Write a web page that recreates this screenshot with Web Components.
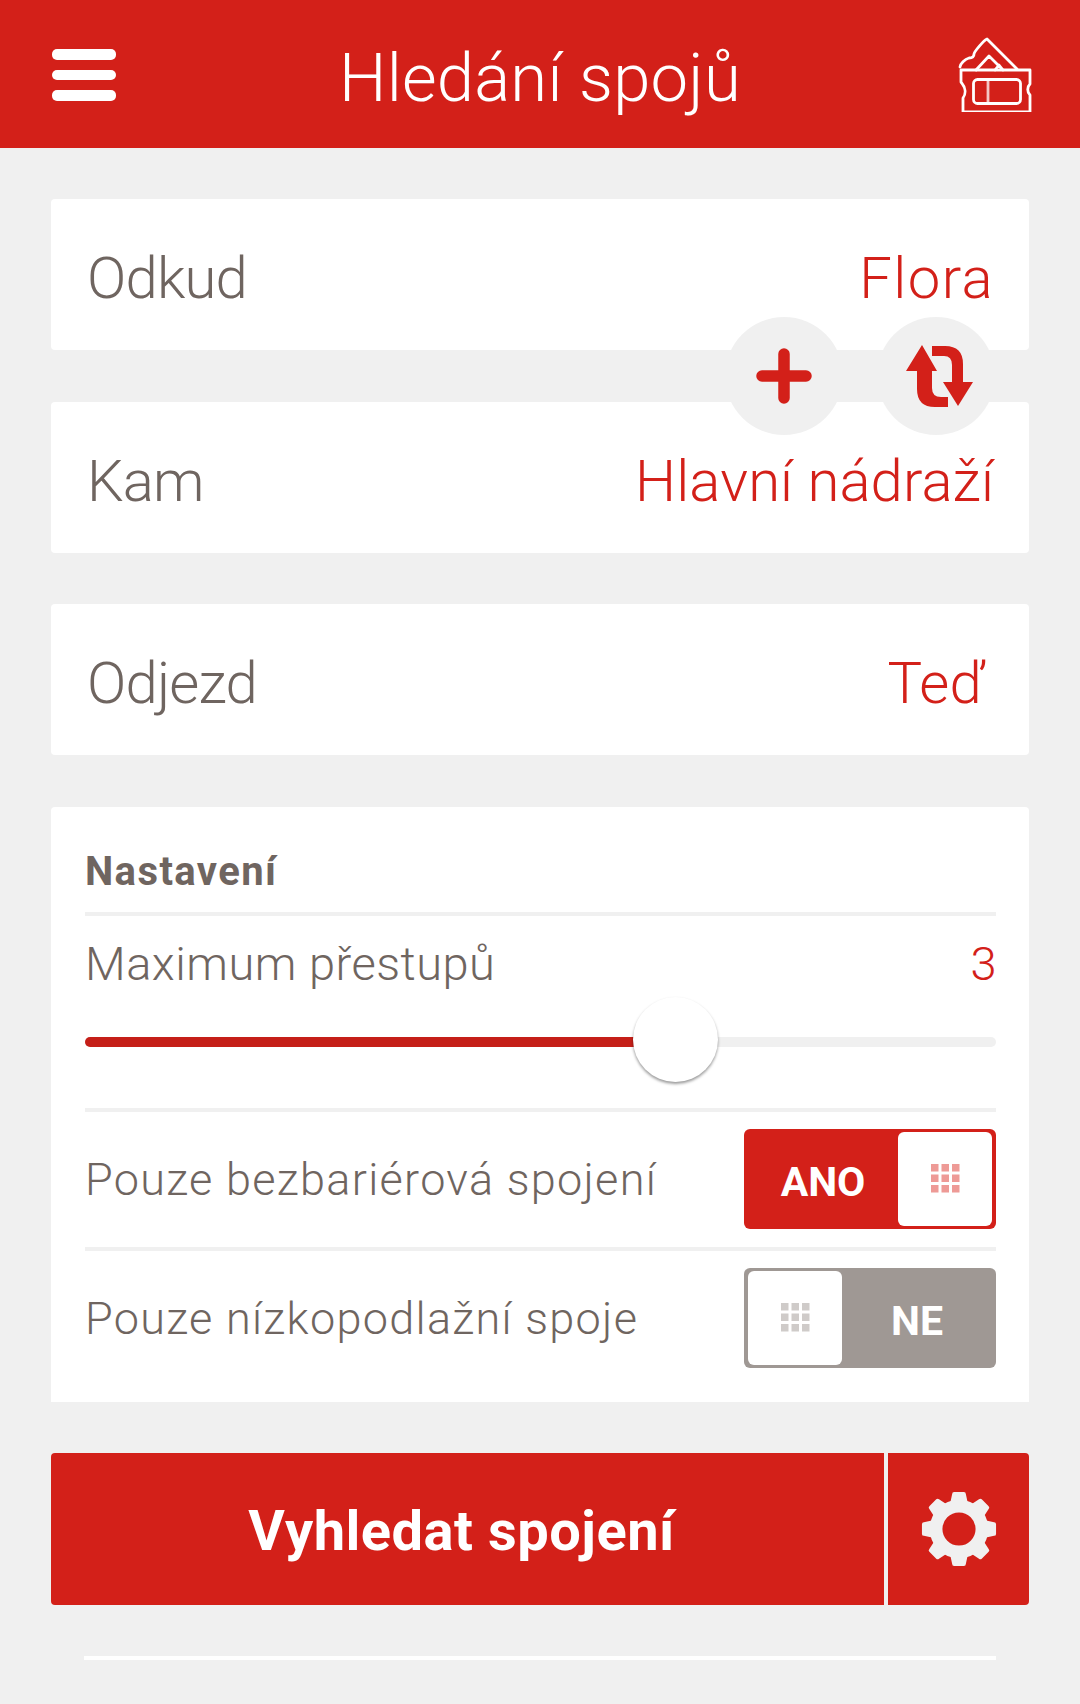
<!DOCTYPE html>
<html lang="cs"><head><meta charset="utf-8"><title>Hledání spojů</title>
<style>
html,body{margin:0;padding:0;background:#f0f0f0}
body{width:1080px;height:1704px;overflow:hidden;font-family:Roboto,"Liberation Sans",sans-serif;color:#6f6560}
</style></head><body>
<app-header title="Hledání spojů"></app-header>
<app-main>
  <route-fields>
    <field-row label="Odkud" value="Flora" style="--vs:1.4px"></field-row>
    <field-row label="Kam" value="Hlavní nádraží"></field-row>
    <round-btn slot="over" kind="plus" style="left:674px"></round-btn>
    <round-btn slot="over" kind="swap" style="left:826px"></round-btn>
  </route-fields>
  <field-row label="Odjezd" value="Teď" style="--vm:8px"></field-row>
  <settings-card title="Nastavení">
    <slider-row label="Maximum přestupů" value="3"></slider-row>
    <toggle-row label="Pouze bezbariérová spojení" on="1"></toggle-row>
    <toggle-row label="Pouze nízkopodlažní spoje"></toggle-row>
  </settings-card>
  <search-bar label="Vyhledat spojení"></search-bar>
  <end-rule></end-rule>
</app-main>
<script>
function def(name,css,html){
  customElements.define(name,class extends HTMLElement{
    connectedCallback(){
      if(this.shadowRoot)return;
      const r=this.attachShadow({mode:'open'});
      const a=n=>this.getAttribute(n)||'';
      r.innerHTML='<style>'+css+'</style>'+(typeof html==='function'?html(a):html);
    }
  });
}
const RED='#d32019';
def('app-header',`:host{display:flex;height:148px;background:${RED};align-items:center;justify-content:space-between;padding:0 48px 0 52px;box-sizing:border-box;position:relative}
.m{display:flex;flex-direction:column;gap:10px;width:64px;margin-top:2px}
.m i{display:block;height:10.5px;border-radius:5px;background:#fff}
h1{margin:0;font:300 67px/1 Roboto,sans-serif;color:#fff;letter-spacing:.2px;position:absolute;left:0;right:0;text-align:center;top:45px}
svg{display:block;position:relative}`,
a=>`<div class="m"><i></i><i></i><i></i></div><h1>${a('title')}</h1>
<svg width="76" height="76" viewBox="956 34 76 76" fill="none" stroke="#fff" stroke-width="2.8" stroke-linejoin="round" stroke-linecap="round">
<path d="M961 68H1030V82C1027 85 1027 90 1030 93V110H963V96C966 92 966 86 961 80Z"/>
<path d="M960 65C960 62 965 57 969 56C973 56 974 54 974 52C974 50 984 38 987 37L1017 67"/>
<path d="M976 68L989 54L1003 68M995 68L999 63L1003 68"/>
<rect x="973.500" y="77.500" width="47" height="24" rx="4"/><path d="M988 78V101" stroke-opacity=".75"/></svg>`);
def('app-main',':host{display:flex;flex-direction:column;gap:51.5px;padding:51px 51px 0}','<slot></slot>');
def('route-fields',':host{display:flex;flex-direction:column;gap:51.5px;position:relative}::slotted(round-btn){position:absolute;top:118px}','<slot></slot><slot name="over"></slot>');
def('field-row',`:host{display:flex;height:151px;background:#fff;border-radius:4px;align-items:center;justify-content:space-between;padding:7px 35px 0 36px;box-sizing:border-box;font:300 58px/1 Roboto,sans-serif}
.l{letter-spacing:-.8px}.v{color:${RED};letter-spacing:var(--vs,.1px);margin-right:var(--vm,0)}`,a=>`<span class="l">${a('label')}</span><span class="v">${a('value')}</span>`);
def('round-btn',':host{display:flex;width:118px;height:118px;border-radius:50%;background:#f0f0f0;align-items:center;justify-content:center}svg{display:block}svg.s{margin-left:8px}',
a=>a('kind')==='plus'
?`<svg width="58" height="58" viewBox="0 0 58 58"><path d="M29 7V51M7 29H51" stroke="${RED}" stroke-width="11.500" stroke-linecap="round"/></svg>`
:`<svg class="s" width="68" height="62" viewBox="906 345 68 62" fill="${RED}"><path d="M922 345L937 371H932V388Q932 397 941 397H948V407H935Q917 407 917 389V371H906Z"/><path d="M932 346H945Q963 346 963 364V382H973L958 406L943 382H952V365Q952 356 944 356H932Z"/></svg>`);
def('settings-card',`:host{display:block;height:595px;background:#fff;border-radius:4px 4px 0 0;padding:0 33px 0 34px;box-sizing:border-box}
h2{margin:0;height:105px;box-sizing:border-box;padding-top:45px;font:700 40px/1 Roboto,sans-serif;letter-spacing:1.4px;color:#6f6560}
::slotted(*){border-top:4px solid #f0f0f0}`,a=>`<h2>${a('title')}</h2><slot></slot>`);
def('slider-row',`:host{display:block;height:196px;box-sizing:border-box;position:relative;font:300 47px/1 Roboto,sans-serif;letter-spacing:.5px}
.t{display:flex;justify-content:space-between;padding-top:24px}.v{color:${RED};margin-right:-1px}
.tr{position:absolute;left:0;right:0;top:121px;height:10px;border-radius:5px;background:#f0f0f0}
.f{width:592px;height:10px;border-radius:5px;background:#c51f18}
.k{position:absolute;left:548px;top:81px;width:85px;height:85px;border-radius:50%;background:#fff;box-shadow:0 2px 3px rgba(0,0,0,.4)}`,
a=>`<div class="t"><span>${a('label')}</span><span class="v">${a('value')}</span></div><div class="tr"><div class="f"></div></div><div class="k"></div>`);
const grid=c=>`<svg width="29" height="29" viewBox="0 0 29 29" fill="${c}">${[0,10.500,21].flatMap(y=>[0,10.500,21].map(x=>`<rect x="${x}" y="${y}" width="7.500" height="7.500"/>`)).join('')}</svg>`;
def('toggle-row',`:host{display:flex;height:139px;box-sizing:border-box;align-items:flex-start;justify-content:space-between;font:300 45px/1 Roboto,sans-serif;letter-spacing:1.3px}
.l{padding-top:45px}
.s{margin-top:17px;width:252px;height:100px;box-sizing:border-box;border-radius:6px;padding:3px 4px;display:flex;align-items:stretch;justify-content:space-between;color:#fff;font:700 41px/101px Roboto,sans-serif;letter-spacing:0}
.s.on{background:${RED}}.s.off{background:#9f9894}
.k{width:94px;background:#fff;border-radius:6px;display:flex;align-items:center;justify-content:center}
.x{flex:1;text-align:center}
svg{display:block}`,
a=>a('on')
?`<span class="l">${a('label')}</span><div class="s on"><span class="x">ANO</span><span class="k">${grid('#ee9a96')}</span></div>`
:`<span class="l">${a('label')}</span><div class="s off"><span class="k">${grid('#cfcbc9')}</span><span class="x">NE</span></div>`);
def('search-bar',`:host{display:flex;height:152px;background:${RED};border-radius:4px;color:#fff}
.b{width:833px;box-sizing:border-box;padding:4px 12px 0 0;display:flex;align-items:center;justify-content:center;font:700 56px/1 Roboto,sans-serif;letter-spacing:.5px}
.sep{width:4px;background:#f0f0f0}
.g{flex:1;display:flex;align-items:center;justify-content:center}svg{display:block}`,
a=>{
 let teeth='';for(let i=0;i<8;i++)teeth+=`<path transform="rotate(${i*45} 40 40)" d="M33 4Q33 2 35 2H45Q47 2 47 4L50 18H30Z"/>`;
 return `<div class="b">${a('label')}</div><div class="sep"></div><div class="g"><svg width="78" height="78" viewBox="0 0 80 80"><g fill="#f0f0f0">${teeth}</g><circle cx="40" cy="40" r="23.500" fill="none" stroke="#f0f0f0" stroke-width="13"/></svg></div>`;
});
def('end-rule',':host{display:block;height:4px;background:#fff;margin:-.5px 33px 0}','');
</script>
</body></html>
